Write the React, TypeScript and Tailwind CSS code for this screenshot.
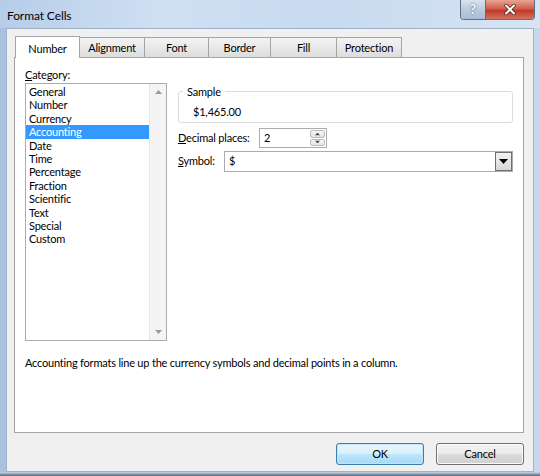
import { useState } from "react";

const categories = [
  "General",
  "Number",
  "Currency",
  "Accounting",
  "Date",
  "Time",
  "Percentage",
  "Fraction",
  "Scientific",
  "Text",
  "Special",
  "Custom",
];

const tabs = [
  { label: "Number", w: "w-[65px]" },
  { label: "Alignment", w: "w-[66px]" },
  { label: "Font", w: "w-[65px]" },
  { label: "Border", w: "w-[63px]" },
  { label: "Fill", w: "w-[67px]" },
  { label: "Protection", w: "w-[66px]" },
];

function Arrow({ up, className }: { up?: boolean; className?: string }) {
  return (
    <svg width="7" height="4" viewBox="0 0 7 4" className={className}>
      <path d={up ? "M0 4 L3.5 0 L7 4 Z" : "M0 0 L7 0 L3.5 4 Z"} fill="currentColor" />
    </svg>
  );
}

function TitleBar() {
  return (
    <div className="relative flex h-[28px] items-center bg-[linear-gradient(90deg,#b6cde8,#cfe0f3_30%,#c7daef_60%,#d6e4f3)] pl-[7px] pt-[3px]">
      <span className="text-[12px] tracking-[-0.1px] text-black">Format Cells</span>
      <div className="absolute right-[5px] top-0 flex h-[20px] overflow-hidden rounded-b-[4px] border border-t-0 border-[#5f6f84]">
        <div className="flex w-[25px] items-center justify-center border-r border-[#5f6f84] bg-[linear-gradient(180deg,#d7e3f0,#b9cbe0_50%,#a9bdd4)]">
          <span className="text-[13px] font-bold leading-none text-white [text-shadow:0_0_2px_#3b4d63]">?</span>
        </div>
        <div className="flex w-[48px] items-center justify-center bg-[linear-gradient(180deg,#e8a493,#d0614b_45%,#c0392b_55%,#d2735e)]">
          <svg width="12" height="11" viewBox="0 0 12 11">
            <path d="M2 1.5 L10 9.5 M10 1.5 L2 9.5" stroke="#4a1a12" strokeWidth="3.4" strokeLinecap="round" />
            <path d="M2 1.5 L10 9.5 M10 1.5 L2 9.5" stroke="#ffffff" strokeWidth="2" strokeLinecap="round" />
          </svg>
        </div>
      </div>
    </div>
  );
}

function Tabs() {
  return (
    <div className="flex h-[21px] items-end pl-[1px]">
      {tabs.map((t, i) =>
        i === 0 ? (
          <div
            key={t.label}
            className={`relative z-10 -mb-px flex h-[22px] ${t.w} items-start justify-center border border-b-0 border-[#a5a5a5] bg-white pt-[4px] text-black`}
          >
            {t.label}
          </div>
        ) : (
          <div
            key={t.label}
            className={`-ml-px flex h-[20px] ${t.w} items-center justify-center border border-b-0 border-[#a5a5a5] bg-[linear-gradient(180deg,#f3f3f3,#e9e9e9_50%,#dcdcdc)] pt-[1px] text-black`}
          >
            {t.label}
          </div>
        )
      )}
    </div>
  );
}

function CategoryList() {
  const [selected, setSelected] = useState("Accounting");
  return (
    <div className="flex flex-col">
      <span className="mb-[2px] h-[13px] leading-[13px]">
        <u>C</u>ategory:
      </span>
      <div className="flex h-[258px] w-[142px] border border-[#acacac] bg-white">
        <ul className="flex-1 pt-[1px]">
          {categories.map((c) => (
            <li
              key={c}
              onClick={() => setSelected(c)}
              className={`h-[13.4px] pl-[3px] leading-[13.4px] ${
                c === selected ? "bg-[#3399ff] text-white" : "text-black"
              }`}
            >
              {c}
            </li>
          ))}
        </ul>
        <div className="flex w-[17px] flex-col items-center justify-between border-l border-[#e6e6e6] bg-[#f4f4f4] py-[6px] text-[#9a9a9a]">
          <Arrow up />
          <Arrow />
        </div>
      </div>
    </div>
  );
}

function SpinBox() {
  return (
    <div className="flex h-[20px] w-[68px] border border-[#acacac] bg-white">
      <div className="flex flex-1 items-center pl-[4px]">2</div>
      <div className="flex w-[17px] flex-col gap-[1px] p-[1px]">
        <div className="flex flex-1 items-center justify-center rounded-[2px] border border-[#bcbcbc] bg-[linear-gradient(180deg,#f6f6f6,#e3e3e3)] text-[#4a4a4a]">
          <Arrow up className="scale-75" />
        </div>
        <div className="flex flex-1 items-center justify-center rounded-[2px] border border-[#bcbcbc] bg-[linear-gradient(180deg,#f6f6f6,#e3e3e3)] text-[#4a4a4a]">
          <Arrow className="scale-75" />
        </div>
      </div>
    </div>
  );
}

function SymbolCombo() {
  return (
    <div className="flex h-[21px] flex-1 border border-[#acacac] bg-white">
      <div className="flex flex-1 items-center pl-[4px]">$</div>
      <div className="flex w-[17px] items-center justify-center border border-[#707070] bg-[linear-gradient(180deg,#f2f2f2,#e6e6e6_50%,#d6d6d6)] text-black">
        <svg width="9" height="5" viewBox="0 0 9 5">
          <path d="M0 0 L9 0 L4.5 5 Z" fill="currentColor" />
        </svg>
      </div>
    </div>
  );
}

function Button({ label, primary }: { label: string; primary?: boolean }) {
  return (
    <button
      className={`flex h-[22px] w-[88px] items-center justify-center rounded-[3px] border text-black ${
        primary
          ? "border-[#3c7fb1] bg-[linear-gradient(180deg,#eaf6fd,#d9f0fc_50%,#bee6fd_51%,#a7d9f5)] shadow-[inset_0_0_0_1px_#bfe3f7]"
          : "border-[#707070] bg-[linear-gradient(180deg,#f2f2f2,#ebebeb_50%,#dddddd_51%,#cfcfcf)] shadow-[inset_0_0_0_1px_#fcfcfc]"
      }`}
    >
      {label}
    </button>
  );
}

export default function App() {
  return (
    <div className="flex h-[476px] w-[540px] flex-col overflow-hidden bg-[linear-gradient(90deg,#a9c2df,#c6d8ed)] font-['Lato',sans-serif] text-[11px] tracking-[-0.2px] text-black">
      <TitleBar />
      <div className="mx-[6px] flex flex-1 flex-col border border-[#9fb2c8] bg-[#f0f0f0] pl-[7px] pr-[9px] pt-[7px]">
        <Tabs />
        <div className="flex h-[376px] flex-col border border-[#a5a5a5] bg-white px-[10px] pt-[10px]">
          <div className="flex gap-[11px]">
            <CategoryList />
            <div className="flex flex-1 flex-col pt-[17px]">
              <fieldset className="h-[38px] rounded-[3px] border border-[#dcdcdc] pl-[3px] pr-[8px]">
                <legend className="ml-[1px] px-[4px] leading-[13px]">Sample</legend>
                <div className="pl-[11px] pt-[7px] leading-[13px]">$1,465.00</div>
              </fieldset>
              <div className="mt-[5px] flex items-center">
                <span className="w-[81px]">
                  <u>D</u>ecimal places:
                </span>
                <SpinBox />
              </div>
              <div className="mt-[3px] flex items-center">
                <span className="w-[46px]">
                  <u>S</u>ymbol:
                </span>
                <SymbolCombo />
              </div>
            </div>
          </div>
          <p className="mt-[14px]">
            Accounting formats line up the currency symbols and decimal points in a column.
          </p>
        </div>
        <div className="flex justify-end gap-[12px] pt-[10px]">
          <Button label="OK" primary />
          <Button label="Cancel" />
        </div>
        <div className="flex-1" />
      </div>
      <div className="h-[4px] bg-[linear-gradient(180deg,#c9d9ec,#55657a)]" />
    </div>
  );
}
